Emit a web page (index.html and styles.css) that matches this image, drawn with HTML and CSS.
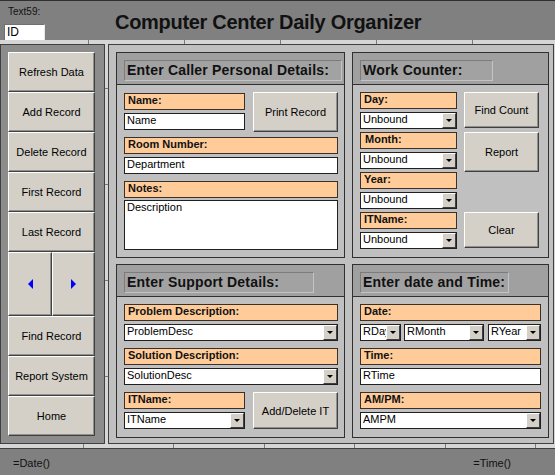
FILE: index.html
```html
<!DOCTYPE html>
<html>
<head>
<meta charset="utf-8">
<title>Computer Center Daily Organizer</title>
<link rel="stylesheet" href="styles.css">
</head>
<body>
<div class="app">
  <header class="hdr">
    <div class="idblock">
      <div class="idlabel">Text59:</div>
      <div class="idbox">ID</div>
    </div>
    <h1 class="title">Computer Center Daily Organizer</h1>
  </header>
  <div class="ruler ruler-top"></div>
  <div class="main">
    <nav class="nav">
      <button class="btn nbtn">Refresh Data</button>
      <button class="btn nbtn">Add Record</button>
      <button class="btn nbtn">Delete Record</button>
      <button class="btn nbtn">First Record</button>
      <button class="btn nbtn">Last Record</button>
      <div class="arrows">
        <button class="btn abtn"><span class="tri tri-l"></span></button>
        <button class="btn abtn"><span class="tri tri-r"></span></button>
      </div>
      <button class="btn nbtn">Find Record</button>
      <button class="btn nbtn">Report System</button>
      <button class="btn nbtn">Home</button>
    </nav>
    <div class="gutter"></div>
    <div class="content">
      <section class="panel">
        <div class="phd"><div class="ptitle w-caller">Enter Caller Personal Details:</div></div>
        <div class="pbody">
          <div class="row">
            <div class="col-l">
              <div class="lbl first">Name:</div>
              <div class="txt">Name</div>
            </div>
            <button class="btn pbtn print">Print Record</button>
          </div>
          <div class="lbl room">Room Number:</div>
          <div class="txt gap">Department</div>
          <div class="lbl">Notes:</div>
          <div class="txt area">Description</div>
        </div>
      </section>

      <section class="panel">
        <div class="phd"><div class="ptitle w-work">Work Counter:</div></div>
        <div class="pbody wbody">
          <div class="wcol">
            <div class="lbl">Day:</div>
            <div class="combo wc"><span class="cv">Unbound</span><span class="dd"></span></div>
            <div class="lbl ind">Month:</div>
            <div class="combo wc"><span class="cv">Unbound</span><span class="dd"></span></div>
            <div class="lbl">Year:</div>
            <div class="combo wc"><span class="cv">Unbound</span><span class="dd"></span></div>
            <div class="lbl">ITName:</div>
            <div class="combo wc"><span class="cv">Unbound</span><span class="dd"></span></div>
          </div>
          <div class="bcol">
            <button class="btn pbtn find">Find Count</button>
            <button class="btn pbtn report">Report</button>
            <button class="btn pbtn clear">Clear</button>
          </div>
        </div>
      </section>

      <section class="panel">
        <div class="phd"><div class="ptitle w-support">Enter Support Details:</div></div>
        <div class="pbody">
          <div class="lbl">Problem Description:</div>
          <div class="combo gap"><span class="cv">ProblemDesc</span><span class="dd"></span></div>
          <div class="lbl">Solution Description:</div>
          <div class="combo gap"><span class="cv">SolutionDesc</span><span class="dd"></span></div>
          <div class="row">
            <div class="col-l">
              <div class="lbl">ITName:</div>
              <div class="combo"><span class="cv">ITName</span><span class="dd"></span></div>
            </div>
            <button class="btn pbtn addit">Add/Delete IT</button>
          </div>
        </div>
      </section>

      <section class="panel">
        <div class="phd"><div class="ptitle w-date">Enter date and Time:</div></div>
        <div class="pbody">
          <div class="lbl dw">Date:</div>
          <div class="drow">
            <div class="combo rday"><span class="cv">RDay</span><span class="dd"></span></div>
            <div class="combo rmonth"><span class="cv">RMonth</span><span class="dd"></span></div>
            <div class="combo ryear"><span class="cv">RYear</span><span class="dd"></span></div>
          </div>
          <div class="lbl dw">Time:</div>
          <div class="txt dw gap">RTime</div>
          <div class="lbl dw">AM/PM:</div>
          <div class="combo dw"><span class="cv">AMPM</span><span class="dd"></span></div>
        </div>
      </section>
    </div>
    <div class="gutter-r"></div>
  </div>
  <div class="ruler ruler-bottom"></div>
  <footer class="ftr">
    <span>=Date()</span>
    <span>=Time()</span>
  </footer>
</div>
</body>
</html>
```

FILE: styles.css
```css
* { box-sizing: border-box; }

body {
  margin: 0;
  background: #808080;
  font-family: "Liberation Sans", Arial, sans-serif;
  font-size: 11px;
  color: #000;
}

.app {
  width: 555px;
  height: 475px;
  display: flex;
  flex-direction: column;
  overflow: hidden;
}

/* header */
.hdr {
  height: 40px;
  border-top: 1px solid #303030;
  background: #808080;
  display: flex;
  align-items: flex-start;
}

.idblock {
  width: 115px;
  padding-left: 4px;
}

.idlabel {
  font-size: 10px;
  line-height: 12px;
  height: 12px;
  margin: 5px 0 0 4px;
  color: #111;
}

.idbox {
  width: 41px;
  height: 17px;
  margin-top: 6px;
  background: #fff;
  border: 1px solid;
  border-color: #707070 #e8e8e8 #e8e8e8 #707070;
  font-size: 12px;
  line-height: 14px;
  padding-left: 2px;
}

.title {
  margin: 11px 0 0 0;
  font-size: 20px;
  line-height: 20px;
  font-weight: bold;
  letter-spacing: -0.3px;
  color: #111;
  white-space: nowrap;
}

/* rulers */
.ruler { height: 4px; }

.ruler-top {
  background: repeating-linear-gradient(90deg, #d6d6d6 0 88px, #7a7a7a 88px 89px, #d6d6d6 89px 96px);
}

.ruler-bottom {
  background: repeating-linear-gradient(90deg, #d6d6d6 0 83px, #7a7a7a 83px 84px, #d6d6d6 84px 90.5px);
}

.main {
  height: 400px;
  display: flex;
}

/* left navigation */
.nav {
  width: 105px;
  border: 1px solid #404040;
  background: #8c8c8c;
  padding: 7px 0 0 7px;
  display: flex;
  flex-direction: column;
}

.btn {
  margin: 0;
  padding: 0;
  font: inherit;
  font-size: 11px;
  color: #000;
  background: #d4d0c8;
  border: 1px solid;
  border-color: #ffffff #404040 #404040 #ffffff;
  box-shadow: inset -1px -1px 0 #909090;
  display: flex;
  align-items: center;
  justify-content: center;
  white-space: nowrap;
}

.nbtn {
  width: 87px;
  height: 40px;
}

.arrows {
  display: flex;
  width: 87px;
  height: 64px;
}

.abtn {
  width: 44px;
  height: 64px;
}

.abtn + .abtn { width: 43px; }

.tri {
  width: 0;
  height: 0;
  border-top: 5px solid transparent;
  border-bottom: 5px solid transparent;
}

.tri-l { border-right: 5px solid #0000ff; }
.tri-r { border-left: 5px solid #0000ff; }

.gutter {
  width: 3px;
  background: repeating-linear-gradient(180deg, #d6d6d6 0 44px, #7a7a7a 44px 45px, #d6d6d6 45px 96px);
}

.gutter-r {
  width: 1px;
  background: #d6d6d6;
}

/* content grid */
.content {
  width: 446px;
  border: 1px solid #404040;
  background: #c0c0c0;
  padding: 7px 4px 0 7px;
  display: grid;
  grid-template-columns: 229px 197px;
  grid-template-rows: 206px 174px;
  column-gap: 7px;
  row-gap: 6px;
}

.panel {
  border: 1px solid #303030;
  background: #c0c0c0;
  display: flex;
  flex-direction: column;
}

.phd {
  height: 32px;
  border-bottom: 1px solid #303030;
  background: #a0a0a0;
  padding: 7px 0 0 7px;
}

.ptitle {
  height: 21px;
  border: 1px solid;
  border-color: #7c7c7c #c4c4c4 #c4c4c4 #7c7c7c;
  background: #a2a2a2;
  font-size: 14px;
  font-weight: bold;
  line-height: 19px;
  padding-left: 2px;
  letter-spacing: 0.2px;
  white-space: nowrap;
  color: #111;
}

.w-caller { width: 218px; }
.w-work { width: 133px; }
.w-support { width: 190px; }
.w-date { width: 149px; }

.pbody {
  padding: 7px 0 0 7px;
}

.row {
  display: flex;
  gap: 8px;
  align-items: flex-start;
}

.col-l {
  width: 121px;
}

/* fields */
.lbl {
  width: 214px;
  height: 17px;
  border: 1px solid #3a3028;
  background: #ffcc99;
  font-weight: bold;
  line-height: 13px;
  padding-left: 3px;
  margin-bottom: 3px;
  white-space: nowrap;
  color: #111;
}

.col-l .lbl { width: 121px; }
.lbl.first { margin-top: 1px; }
.lbl.room { margin-top: 5px; }
.lbl.ind { padding-left: 4px; }

.txt {
  width: 214px;
  height: 17px;
  border: 1px solid #202020;
  background: #fff;
  line-height: 13px;
  padding-left: 2px;
  white-space: nowrap;
  overflow: hidden;
}

.col-l .txt { width: 121px; }

.gap { margin-bottom: 7px; }

.txt.area {
  height: 50px;
}

.lbl + .txt.area { margin-top: -1px; }

.combo {
  width: 214px;
  height: 17px;
  border: 1px solid #202020;
  background: #fff;
  display: flex;
}

.col-l .combo { width: 121px; }

.cv {
  flex: 1;
  min-width: 0;
  overflow: hidden;
  white-space: nowrap;
  line-height: 13px;
  padding-left: 2px;
}

.dd {
  width: 14px;
  flex: none;
  background: #d4d0c8;
  border: 1px solid;
  border-color: #ffffff #404040 #404040 #ffffff;
  display: flex;
  align-items: center;
  justify-content: center;
}

.dd::after {
  content: "";
  width: 0;
  height: 0;
  border-left: 3px solid transparent;
  border-right: 3px solid transparent;
  border-top: 3px solid #000;
}

/* caller */
.pbtn.print {
  width: 85px;
  height: 40px;
}

.pbtn.addit {
  width: 85px;
  height: 37px;
}

/* work counter */
.wbody {
  display: flex;
  gap: 7px;
}

.wcol {
  width: 97px;
}

.wcol .lbl { width: 97px; }

.wcol .combo {
  width: 97px;
  margin-bottom: 3px;
}

.bcol {
  width: 75px;
  display: flex;
  flex-direction: column;
}

.pbtn.find { height: 36px; }
.pbtn.report { height: 40px; margin-top: 4px; }
.pbtn.clear { height: 36px; margin-top: 40px; }

/* date */
.dw { width: 181px; }

.drow {
  display: flex;
  margin-bottom: 7px;
}

.combo.rday { width: 41px; }
.combo.rmonth { width: 80px; margin-left: 3px; }
.combo.ryear { width: 53px; margin-left: 4px; }

/* footer */
.ftr {
  height: 27px;
  border-top: 1px solid #404040;
  background: #808080;
  display: flex;
  justify-content: space-between;
  align-items: center;
  padding: 2px 44px 0 13px;
  color: #111;
}
```
